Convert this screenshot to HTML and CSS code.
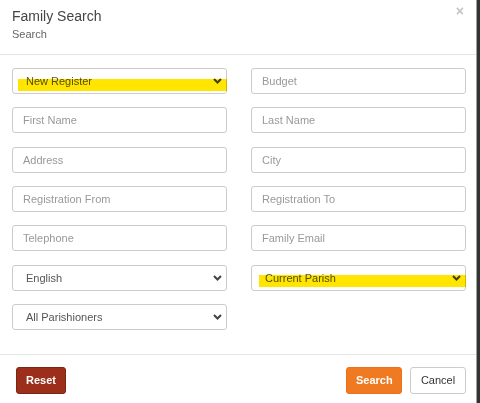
FILE: index.html
```html
<!DOCTYPE html>
<html lang="en">
    <head>
        <meta charset="UTF-8">
        <meta name="viewport" content="width=device-width, initial-scale=1.0">
        <title>Family Search</title>
        <link rel="stylesheet" href="styles.css">
    </head>
    <body>
        <div class="modal">
            <div class="modal-header">
                <button type="button" class="close">&times;</button>
                <h4 class="modal-title">Family Search</h4>
                <div class="modal-subtitle">Search</div>
            </div>

            <form class="modal-body">
                <div class="select-wrap">
                    <select class="form-control">
                        <option>New Register</option>
                    </select>
                    <svg class="chevron" width="9" height="6" viewBox="0 0 9 6"><path d="M1 1l3.5 3.5L8 1" fill="none" stroke="#444" stroke-width="2"/></svg>
                    <span class="marker marker-left"></span>
                </div>
                <input type="text" class="form-control" placeholder="Budget" />

                <input type="text" class="form-control" placeholder="First Name" />
                <input type="text" class="form-control" placeholder="Last Name" />

                <input type="text" class="form-control" placeholder="Address" />
                <input type="text" class="form-control" placeholder="City" />

                <input type="text" class="form-control" placeholder="Registration From" />
                <input type="text" class="form-control" placeholder="Registration To" />

                <input type="tel" class="form-control" placeholder="Telephone" />
                <input type="email" class="form-control" placeholder="Family Email" />

                <div class="select-wrap">
                    <select class="form-control">
                        <option>English</option>
                    </select>
                    <svg class="chevron" width="9" height="6" viewBox="0 0 9 6"><path d="M1 1l3.5 3.5L8 1" fill="none" stroke="#444" stroke-width="2"/></svg>
                </div>
                <div class="select-wrap">
                    <select class="form-control">
                        <option>Current Parish</option>
                    </select>
                    <svg class="chevron" width="9" height="6" viewBox="0 0 9 6"><path d="M1 1l3.5 3.5L8 1" fill="none" stroke="#444" stroke-width="2"/></svg>
                    <span class="marker marker-right"></span>
                </div>

                <div class="select-wrap">
                    <select class="form-control">
                        <option>All Parishioners</option>
                    </select>
                    <svg class="chevron" width="9" height="6" viewBox="0 0 9 6"><path d="M1 1l3.5 3.5L8 1" fill="none" stroke="#444" stroke-width="2"/></svg>
                </div>
            </form>

            <div class="modal-footer">
                <button type="button" class="btn btn-reset">Reset</button>
                <div class="footer-right">
                    <button type="submit" class="btn btn-search">Search</button>
                    <button type="button" class="btn btn-cancel">Cancel</button>
                </div>
            </div>
        </div>
    </body>
</html>
```

FILE: styles.css
```css
* {
    box-sizing: border-box;
}

html, body {
    margin: 0;
    height: 100%;
}

body {
    background: #333;
    font-family: "Liberation Sans", Arial, sans-serif;
    color: #333;
}

.modal {
    width: 477px;
    height: 100%;
    background: #fff;
    border-right: 1px solid #a0a0a0;
}

.modal-header {
    position: relative;
    padding: 8px 12px 13px;
    border-bottom: 1px solid #e5e5e5;
}

.modal-title {
    margin: 0;
    font-size: 14px;
    font-weight: normal;
    line-height: 17px;
    color: #444;
}

.modal-subtitle {
    margin-top: 3px;
    font-size: 11px;
    line-height: 13px;
    color: #666;
}

.close {
    position: absolute;
    top: 4px;
    right: 12px;
    padding: 0;
    border: none;
    background: none;
    font-family: inherit;
    font-size: 14px;
    font-weight: bold;
    line-height: 14px;
    color: #c4c4c4;
}

.modal-body {
    display: grid;
    grid-template-columns: 215px 215px;
    column-gap: 24px;
    row-gap: 13.33px;
    padding: 13px 12px 24px;
    margin: 0;
}

.form-control {
    display: block;
    width: 100%;
    height: 26px;
    margin: 0;
    padding: 0 10px;
    border: 1px solid #ccc;
    border-radius: 3px;
    background: #fff;
    font-family: inherit;
    font-size: 11px;
    color: #555;
}

.form-control::placeholder {
    color: #999;
}

select.form-control {
    appearance: none;
    padding-left: 13px;
}

.select-wrap {
    position: relative;
}

.chevron {
    position: absolute;
    right: 5px;
    top: 10px;
    pointer-events: none;
}

/* highlighter stroke laid over a field */
.marker {
    position: absolute;
    right: 0;
    height: 12px;
    background: #ffe500;
    mix-blend-mode: multiply;
    pointer-events: none;
}

.marker-left {
    left: 6px;
    top: 11px;
}

.marker-right {
    left: 8px;
    top: 10px;
}

.modal-footer {
    display: flex;
    justify-content: space-between;
    align-items: center;
    padding: 12px 10px 0 16px;
    border-top: 1px solid #e5e5e5;
}

.footer-right {
    display: flex;
    gap: 8px;
}

.btn {
    height: 27px;
    padding: 0 9px;
    border: 1px solid transparent;
    border-radius: 3px;
    font-family: inherit;
    font-size: 11px;
    line-height: 25px;
}

.btn-reset {
    background: #9b2f1b;
    border-color: #7d2413;
    color: #fff;
    font-weight: bold;
    width: 50px;
}

.btn-search {
    background: #f07a22;
    border-color: #ec7118;
    color: #fff;
    font-weight: bold;
    width: 56px;
}

.btn-cancel {
    background: #fff;
    border-color: #ccc;
    color: #333;
    width: 56px;
}
```
